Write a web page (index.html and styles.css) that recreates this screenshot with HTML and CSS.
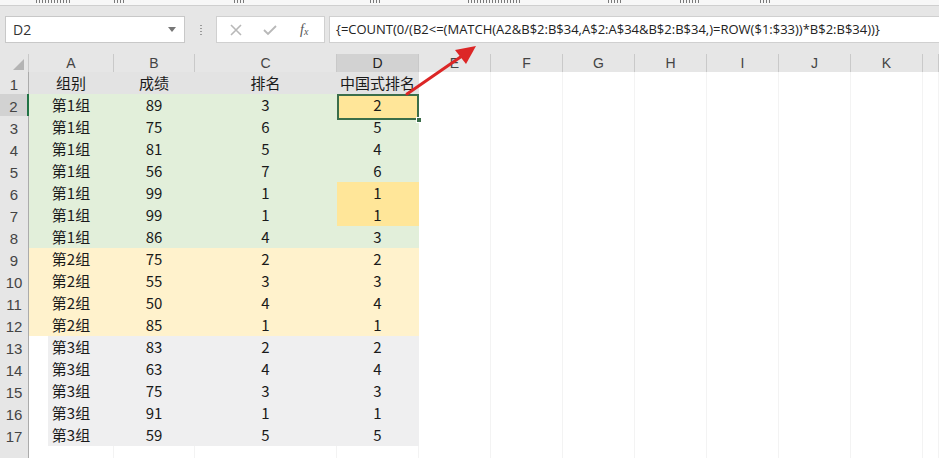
FILE: index.html
```html
<!DOCTYPE html>
<html lang="zh">
<head>
<meta charset="utf-8">
<link rel="stylesheet" href="styles.css">
</head>
<body>
<div class="app">
  <div class="ribbon-strip">
    <span class="frag f1"></span>
    <span class="frag f2"></span>
    <span class="frag f3"></span>
    <span class="frag f4"></span>
    <span class="frag f5"></span>
    <span class="frag f6"></span>
    <span class="frag f7"></span>
    <span class="frag f8"></span>
  </div>
  <div class="toolbar">
    <div class="namebox"><span>D2</span><span class="dd"></span></div>
    <div class="sep"></div>
    <div class="fnbox">
      <svg class="ico" width="14" height="14" viewBox="0 0 14 14"><path d="M2 2 L12 12 M12 2 L2 12" stroke="#b8b8b8" stroke-width="1.6" fill="none"/></svg>
      <svg class="ico" width="16" height="14" viewBox="0 0 16 14"><path d="M2 7 L6 11 L14 3" stroke="#b8b8b8" stroke-width="1.8" fill="none"/></svg>
      <span class="fx">f<sub>x</sub></span>
    </div>
    <div class="formula">{=COUNT(0/(B2&lt;=(MATCH(A2&amp;B$2:B$34,A$2:A$34&amp;B$2:B$34,)=ROW($1:$33))*B$2:B$34))}</div>
  </div>
  <div class="sheet">
    <div class="row head">
      <div class="c corner"><span class="tri"></span></div>
      <div class="c">A</div><div class="c">B</div><div class="c">C</div><div class="c sel-col">D</div>
      <div class="c">E</div><div class="c">F</div><div class="c">G</div><div class="c">H</div><div class="c">I</div><div class="c">J</div><div class="c">K</div><div class="c"></div>
    </div>
    <div class="row">
      <div class="c rh">1</div>
      <div class="c t">组别</div><div class="c t">成绩</div><div class="c t">排名</div><div class="c t">中国式排名</div>
      <div class="c e"></div><div class="c e"></div><div class="c e"></div><div class="c e"></div><div class="c e"></div><div class="c e"></div><div class="c e"></div><div class="c e"></div>
    </div>
    <div class="row">
      <div class="c rh sel-row">2</div>
      <div class="c g">第1组</div><div class="c g">89</div><div class="c g">3</div><div class="c o active">2<span class="handle"></span></div>
      <div class="c e"></div><div class="c e"></div><div class="c e"></div><div class="c e"></div><div class="c e"></div><div class="c e"></div><div class="c e"></div><div class="c e"></div>
    </div>
    <div class="row">
      <div class="c rh">3</div>
      <div class="c g">第1组</div><div class="c g">75</div><div class="c g">6</div><div class="c g">5</div>
      <div class="c e"></div><div class="c e"></div><div class="c e"></div><div class="c e"></div><div class="c e"></div><div class="c e"></div><div class="c e"></div><div class="c e"></div>
    </div>
    <div class="row">
      <div class="c rh">4</div>
      <div class="c g">第1组</div><div class="c g">81</div><div class="c g">5</div><div class="c g">4</div>
      <div class="c e"></div><div class="c e"></div><div class="c e"></div><div class="c e"></div><div class="c e"></div><div class="c e"></div><div class="c e"></div><div class="c e"></div>
    </div>
    <div class="row">
      <div class="c rh">5</div>
      <div class="c g">第1组</div><div class="c g">56</div><div class="c g">7</div><div class="c g">6</div>
      <div class="c e"></div><div class="c e"></div><div class="c e"></div><div class="c e"></div><div class="c e"></div><div class="c e"></div><div class="c e"></div><div class="c e"></div>
    </div>
    <div class="row">
      <div class="c rh">6</div>
      <div class="c g">第1组</div><div class="c g">99</div><div class="c g">1</div><div class="c o">1</div>
      <div class="c e"></div><div class="c e"></div><div class="c e"></div><div class="c e"></div><div class="c e"></div><div class="c e"></div><div class="c e"></div><div class="c e"></div>
    </div>
    <div class="row">
      <div class="c rh">7</div>
      <div class="c g">第1组</div><div class="c g">99</div><div class="c g">1</div><div class="c o">1</div>
      <div class="c e"></div><div class="c e"></div><div class="c e"></div><div class="c e"></div><div class="c e"></div><div class="c e"></div><div class="c e"></div><div class="c e"></div>
    </div>
    <div class="row">
      <div class="c rh">8</div>
      <div class="c g">第1组</div><div class="c g">86</div><div class="c g">4</div><div class="c g">3</div>
      <div class="c e"></div><div class="c e"></div><div class="c e"></div><div class="c e"></div><div class="c e"></div><div class="c e"></div><div class="c e"></div><div class="c e"></div>
    </div>
    <div class="row">
      <div class="c rh">9</div>
      <div class="c y">第2组</div><div class="c y">75</div><div class="c y">2</div><div class="c y">2</div>
      <div class="c e"></div><div class="c e"></div><div class="c e"></div><div class="c e"></div><div class="c e"></div><div class="c e"></div><div class="c e"></div><div class="c e"></div>
    </div>
    <div class="row">
      <div class="c rh">10</div>
      <div class="c y">第2组</div><div class="c y">55</div><div class="c y">3</div><div class="c y">3</div>
      <div class="c e"></div><div class="c e"></div><div class="c e"></div><div class="c e"></div><div class="c e"></div><div class="c e"></div><div class="c e"></div><div class="c e"></div>
    </div>
    <div class="row">
      <div class="c rh">11</div>
      <div class="c y">第2组</div><div class="c y">50</div><div class="c y">4</div><div class="c y">4</div>
      <div class="c e"></div><div class="c e"></div><div class="c e"></div><div class="c e"></div><div class="c e"></div><div class="c e"></div><div class="c e"></div><div class="c e"></div>
    </div>
    <div class="row">
      <div class="c rh">12</div>
      <div class="c y">第2组</div><div class="c y">85</div><div class="c y">1</div><div class="c y">1</div>
      <div class="c e"></div><div class="c e"></div><div class="c e"></div><div class="c e"></div><div class="c e"></div><div class="c e"></div><div class="c e"></div><div class="c e"></div>
    </div>
    <div class="row">
      <div class="c rh">13</div>
      <div class="c s sa">第3组</div><div class="c s">83</div><div class="c s">2</div><div class="c s">2</div>
      <div class="c e"></div><div class="c e"></div><div class="c e"></div><div class="c e"></div><div class="c e"></div><div class="c e"></div><div class="c e"></div><div class="c e"></div>
    </div>
    <div class="row">
      <div class="c rh">14</div>
      <div class="c s sa">第3组</div><div class="c s">63</div><div class="c s">4</div><div class="c s">4</div>
      <div class="c e"></div><div class="c e"></div><div class="c e"></div><div class="c e"></div><div class="c e"></div><div class="c e"></div><div class="c e"></div><div class="c e"></div>
    </div>
    <div class="row">
      <div class="c rh">15</div>
      <div class="c s sa">第3组</div><div class="c s">75</div><div class="c s">3</div><div class="c s">3</div>
      <div class="c e"></div><div class="c e"></div><div class="c e"></div><div class="c e"></div><div class="c e"></div><div class="c e"></div><div class="c e"></div><div class="c e"></div>
    </div>
    <div class="row">
      <div class="c rh">16</div>
      <div class="c s sa">第3组</div><div class="c s">91</div><div class="c s">1</div><div class="c s">1</div>
      <div class="c e"></div><div class="c e"></div><div class="c e"></div><div class="c e"></div><div class="c e"></div><div class="c e"></div><div class="c e"></div><div class="c e"></div>
    </div>
    <div class="row">
      <div class="c rh">17</div>
      <div class="c s sa">第3组</div><div class="c s">59</div><div class="c s">5</div><div class="c s">5</div>
      <div class="c e"></div><div class="c e"></div><div class="c e"></div><div class="c e"></div><div class="c e"></div><div class="c e"></div><div class="c e"></div><div class="c e"></div>
    </div>
    <div class="row">
      <div class="c rh"></div>
      <div class="c e"></div><div class="c e"></div><div class="c e"></div><div class="c e"></div>
      <div class="c e"></div><div class="c e"></div><div class="c e"></div><div class="c e"></div><div class="c e"></div><div class="c e"></div><div class="c e"></div><div class="c e"></div>
    </div>
  </div>
  <svg class="arrow" width="939" height="458" viewBox="0 0 939 458">
    <line x1="407" y1="94" x2="462" y2="56" stroke="#dc2626" stroke-width="3" stroke-linecap="round"/>
    <polygon points="476,46 455,50 466,64" fill="#dc2626"/>
  </svg>
</div>
</body>
</html>
```
FILE: styles.css
```css
* { box-sizing: border-box; }
html, body { margin: 0; padding: 0; }
body {
  width: 939px;
  height: 458px;
  overflow: hidden;
  background: #ffffff;
  font-family: "Noto Sans CJK SC", "Noto Sans", sans-serif;
  color: #1a1a1a;
}
.app { position: relative; width: 939px; height: 458px; overflow: hidden; }

.ribbon-strip {
  height: 6px;
  background: #f7f7f7;
  border-bottom: 1px solid #cfcfcf;
  display: flex;
  align-items: flex-start;
}
.frag {
  display: block;
  height: 3px;
  margin-top: 0;
  background: repeating-linear-gradient(to right, #7a7a7a 0 1px, transparent 1px 3px);
}
.f1 { margin-left: 36px; width: 34px; }
.f2 { margin-left: 44px; width: 10px; }
.f3 { margin-left: 110px; width: 12px; }
.f4 { margin-left: 124px; width: 10px; }
.f5 { margin-left: 88px; width: 52px; }
.f6 { margin-left: 88px; width: 14px; }
.f7 { margin-left: 58px; width: 20px; }
.f8 { margin-left: 60px; width: 12px; }

.toolbar {
  height: 48px;
  background: #e6e6e6;
  display: flex;
  align-items: flex-start;
  padding: 10px 0 0 5px;
}
.namebox {
  width: 180px;
  height: 27px;
  background: #fff;
  border: 1px solid #c8c8c8;
  display: flex;
  align-items: center;
  justify-content: space-between;
  padding: 0 8px 0 7px;
  font-family: "Open Sans", "Noto Sans", sans-serif;
  font-size: 14px;
  color: #333;
}
.dd {
  width: 0; height: 0;
  border-left: 4px solid transparent;
  border-right: 4px solid transparent;
  border-top: 5px solid #777;
}
.sep {
  width: 2px;
  height: 12px;
  margin: 8px 14px 0 15px;
  background-image: radial-gradient(circle, #9a9a9a 0.8px, transparent 1px);
  background-size: 2px 3px;
}
.fnbox {
  width: 109px;
  height: 27px;
  background: #fff;
  border: 1px solid #d0d0d0;
  display: flex;
  align-items: center;
  padding: 0 0 0 12px;
  gap: 19px;
}
.fx {
  font-family: "Liberation Serif", serif;
  font-style: italic;
  font-size: 14px;
  color: #555;
  margin-left: 3px;
}
.fx sub { font-size: 10px; vertical-align: -1px; }
.formula {
  flex: 1;
  margin-left: 4px;
  height: 27px;
  background: #fff;
  border: 1px solid #d0d0d0;
  border-right: none;
  padding-left: 6px;
  font-family: "Open Sans", "Noto Sans", sans-serif;
  font-size: 13px;
  line-height: 25px;
  color: #222;
  white-space: nowrap;
  overflow: hidden;
}

.sheet { display: flex; flex-direction: column; }
.row {
  display: grid;
  grid-template-columns: 29px 85px 81px 142px 82px 72px 72px 72px 72px 72px 72px 72px 1fr;
  height: 22px;
}
.c {
  border-right: 1px solid #f3f3f3;
  border-bottom: 1px solid #f3f3f3;
  font-size: 15px;
  line-height: 22px;
  text-align: center;
  white-space: nowrap;
  position: relative;
}
.row.head { height: 18px; }
.row.head .c {
  background: #e6e6e6;
  border-right: 1px solid #c9c9c9;
  border-bottom: 1px solid #ababab;
  font-family: "Liberation Sans", sans-serif;
  font-size: 14px;
  line-height: 18px;
  color: #444;
}
.row.head .sel-col {
  background: #d2d2d2;
  border-bottom: 2px solid #217346;
  color: #222;
}
.corner .tri {
  position: absolute;
  right: 4px;
  bottom: 3px;
  width: 0; height: 0;
  border-left: 11px solid transparent;
  border-bottom: 11px solid #b4b4b4;
}
.rh {
  background: #e6e6e6;
  border-right: 1px solid #ababab;
  border-bottom: 1px solid #d2d2d2;
  font-family: "Liberation Sans", sans-serif;
  font-size: 15px;
  line-height: 25px;
  color: #444;
}
.rh.sel-row {
  background: #d2d2d2;
  border-right: 2px solid #217346;
}
.t { background: #e3e3e3; border-color: #e3e3e3; }
.g { background: #e2efda; border-color: #e2efda; }
.y { background: #fff2cc; border-color: #fff2cc; }
.s { background: #efeff0; border-color: #efeff0; }
.s.sa { background: linear-gradient(to right, #fff 19px, #efeff0 19px); }
.o { background: #ffe699; border-color: #ffe699; }
.e { background: #fff; }
.active {
  outline: 2px solid #3b6e4a;
  outline-offset: -2px;
  z-index: 2;
}
.handle {
  position: absolute;
  right: -4px;
  bottom: -4px;
  width: 6px;
  height: 6px;
  background: #3b6e4a;
  border: 1px solid #fff;
}
.arrow { position: absolute; left: 0; top: 0; pointer-events: none; z-index: 5; }
```
